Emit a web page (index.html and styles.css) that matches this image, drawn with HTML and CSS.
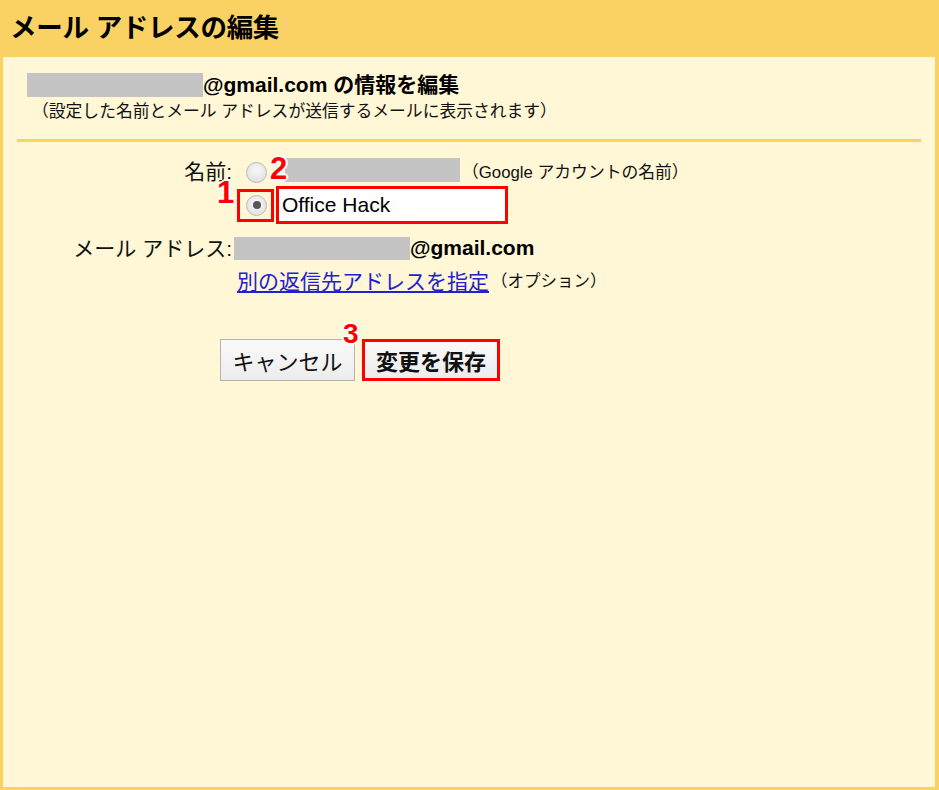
FILE: index.html
```html
<!DOCTYPE html>
<html lang="ja">
<head>
<meta charset="utf-8">
<title>メール アドレスの編集</title>
<link rel="stylesheet" href="styles.css">
</head>
<body>
<div class="page">
  <header class="header">メール アドレスの編集</header>
  <main class="panel">
    <div class="subtitle">
      <span class="mask mask-sub"></span>
      <span class="sub-text">@gmail.com の情報を編集</span>
    </div>
    <div class="note">（設定した名前とメール アドレスが送信するメールに表示されます）</div>
    <div class="rule"></div>

    <div class="form">
      <div class="label row1"><span class="label-text">名前:</span></div>
      <div class="cell row1 name-row">
        <span class="radio"></span>
        <span class="anno anno-2">2</span>
        <span class="mask mask-name"></span>
        <span class="hint hint-google">（Google アカウントの名前）</span>
      </div>

      <div class="label row2"></div>
      <div class="cell row2 custom-row">
        <span class="anno anno-1">1</span>
        <span class="radio-frame"><span class="radio checked"><span class="dot"></span></span></span>
        <span class="name-input">Office Hack</span>
      </div>

      <div class="label row3"><span class="label-text">メール アドレス:</span></div>
      <div class="cell row3 mail-row">
        <span class="mask mask-mail"></span>
        <span class="mail-text">@gmail.com</span>
      </div>

      <div class="label row4"></div>
      <div class="cell row4 reply-row">
        <a class="link" href="#">別の返信先アドレスを指定</a><span class="hint hint-option">（オプション）</span>
      </div>
    </div>

    <div class="buttons">
      <span class="anno anno-3">3</span>
      <button class="btn cancel" type="button">キャンセル</button>
      <button class="btn save" type="button">変更を保存</button>
    </div>
  </main>
</div>
</body>
</html>
```

FILE: styles.css
```css
* { box-sizing: border-box; }
html, body { margin: 0; padding: 0; }
body {
  font-family: "Liberation Sans", "Noto Sans CJK JP", sans-serif;
  color: #000;
  background: #fad264;
}
.page {
  width: 939px;
  height: 790px;
  background: #fad264;
  padding: 0 4px 3px 3px;
  display: flex;
  flex-direction: column;
}
.header {
  height: 57px;
  line-height: 57px;
  padding-left: 7px;
  font-size: 26.5px;
  font-weight: bold;
  letter-spacing: -0.3px;
}
.panel {
  flex: 1;
  background: #fff7d6;
  padding-top: 16px;
  position: relative;
}
.subtitle {
  display: flex;
  align-items: center;
  height: 24px;
  margin-left: 24px;
}
.mask { display: inline-block; background: #c4c4c4; }
.mask-sub { width: 176px; height: 24px; }
.sub-text { font-size: 21px; font-weight: bold; line-height: 24px; }
.note {
  margin-top: 5px;
  margin-left: 29px;
  font-size: 16.8px;
  line-height: 20px;
  color: #111;
}
.rule {
  margin: 17px 14px 0 14px;
  height: 3px;
  background: #fad264;
}
.form {
  margin-top: 15px;
  display: grid;
  grid-template-columns: 229px 1fr;
  font-size: 21px;
}
.label {
  display: flex;
  align-items: center;
  justify-content: flex-end;
  color: #111;
}
.label-text { line-height: 1; }
.cell { display: flex; align-items: center; position: relative; }
.row1 { height: 28px; }
.row2 { height: 38px; margin-top: 1px; }
.row3 { height: 24px; margin-top: 12px; }
.row4 { height: 26px; margin-top: 7px; }

.radio {
  display: inline-flex;
  align-items: center;
  justify-content: center;
  width: 21px;
  height: 21px;
  border-radius: 50%;
  border: 1px solid #b9b9b9;
  background: radial-gradient(circle at 50% 40%, #f7f7f7 0%, #e4e4e4 70%, #d6d6d6 100%);
}
.name-row .radio { margin-left: 14px; margin-top: 3px; }
.mask-name { width: 175px; height: 24px; margin-left: 18px; margin-top: -2px; }
.hint { margin-left: 2px; color: #111; }
.hint-google { font-size: 16.8px; }
.hint-option { font-size: 16.5px; }

.radio-frame {
  margin-left: 5px;
  width: 37px;
  height: 33px;
  border: 3px solid #f00;
  display: flex;
  align-items: center;
  justify-content: center;
  padding-left: 2px;
}
.radio.checked .dot {
  width: 8px;
  height: 8px;
  border-radius: 50%;
  background: #555;
}
.name-input {
  margin-left: 2px;
  width: 232px;
  height: 38px;
  border: 3px solid #f00;
  background: #fff;
  padding-left: 3px;
  display: flex;
  align-items: center;
  font-size: 21px;
}
.mask-mail { width: 176px; height: 23px; margin-left: 2px; }
.mail-text { font-weight: bold; font-size: 21px; }
.link {
  margin-left: 5px;
  color: #2222cc;
  text-decoration: underline;
  text-underline-offset: 2px;
}

.buttons {
  margin-top: 46px;
  margin-left: 217px;
  display: flex;
  gap: 7px;
  position: relative;
}
.btn {
  height: 42px;
  font-family: "Liberation Sans", "Noto Sans CJK JP", sans-serif;
  font-size: 22px;
  color: #111;
  background: linear-gradient(#fafafa, #ececec);
  padding: 0;
  margin: 0;
}
.cancel { width: 135px; border: 1px solid #b3b3b3; }
.save { width: 138px; border: 3px solid #f00; font-weight: bold; }

.anno {
  position: absolute;
  color: #f00;
  font-weight: bold;
  font-size: 31px;
  line-height: 22px;
  font-family: "Liberation Sans", sans-serif;
  text-shadow: -2px 0 #fff, 2px 0 #fff, 0 -2px #fff, 0 2px #fff,
               -1px -1px #fff, 1px 1px #fff, -1px 1px #fff, 1px -1px #fff;
  z-index: 2;
}
.anno-2 { left: 38px; top: 1px; }
.anno-1 { left: -15px; top: -4px; }
.anno-3 { left: 123px; top: -15px; font-size: 28px; line-height: 20px; }
```
